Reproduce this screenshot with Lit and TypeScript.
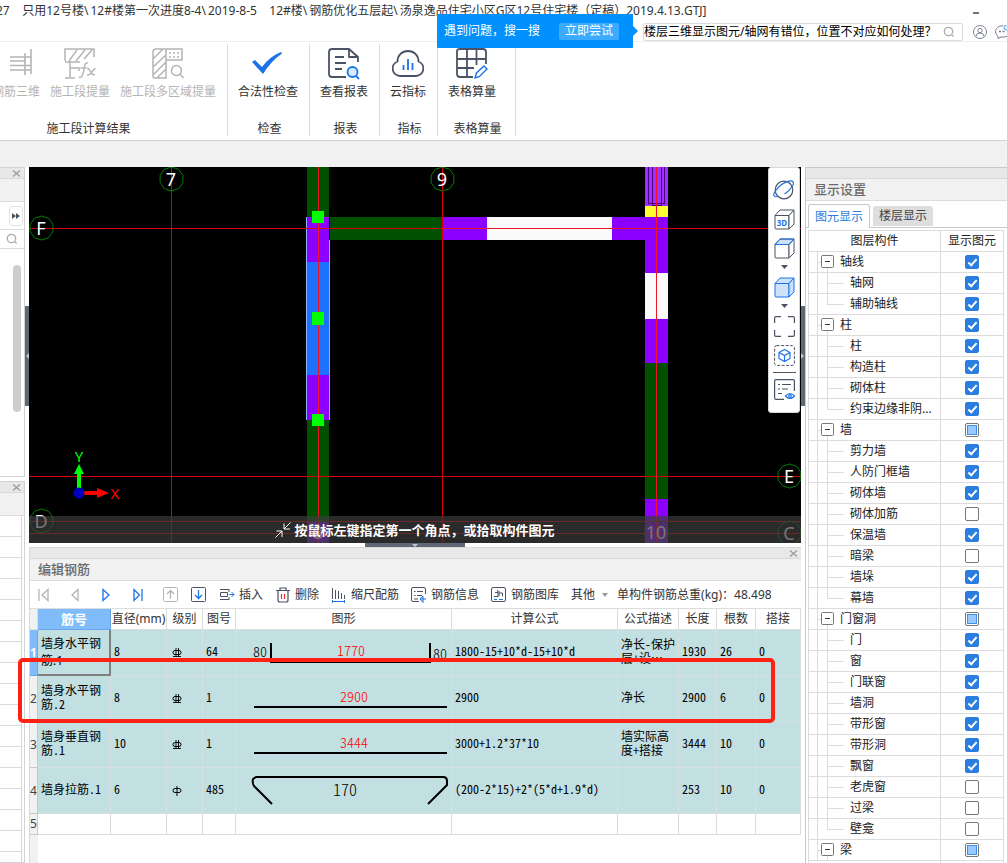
import { LitElement, html, svg, css } from "lit";
import { customElement } from "lit/decorators.js";

const dark = "#4a5365";
const blue = "#1a73e8";
const gray = "#b4b4b4";

const controls = css`
  *,
  *::before,
  *::after {
    box-sizing: border-box;
  }
  button {
    font: inherit;
    color: inherit;
    background: none;
    border: 0;
    padding: 0;
    margin: 0;
    display: inline-flex;
    align-items: center;
    justify-content: center;
    white-space: nowrap;
  }
  svg {
    display: block;
    flex: none;
  }
  table {
    border-collapse: separate;
    border-spacing: 0;
    table-layout: fixed;
    width: 100%;
  }
  th {
    font-weight: normal;
  }
`;

const panelHead = css`
  .grip {
    height: 11px;
    background: #e8e8e8;
    border-bottom: 1px solid #d9d9d9;
    display: flex;
    align-items: center;
    justify-content: flex-end;
    padding-right: 3px;
  }
  .caption {
    height: 22px;
    background: #f1f1f1;
    border-bottom: 1px solid #dcdcdc;
    margin: 0;
    padding: 0 8px;
    font-size: 13px;
    line-height: 21px;
    font-weight: 500;
    color: #6a6a6a;
  }
`;

const closeIcon = html`<svg width="9" height="9" viewBox="0 0 9 9">
  <path d="M1 1.5l7 6M8 1.5l-7 6" stroke="#999" fill="none" stroke-width="1.2" />
</svg>`;

const searchIcon = html`<svg width="12" height="12" viewBox="0 0 12 12" fill="none" stroke="#adadad" stroke-width="1.3">
  <circle cx="5.5" cy="5.5" r="4.2" /><path d="M8.6 8.6l2 2" />
</svg>`;

const ribbonIcons: Record<string, unknown> = {
  steel: html`<svg width="32" height="32" viewBox="0 0 32 32" fill="none" stroke=${gray} stroke-width="1.6">
    <path d="M31 1v25M25 5v22M10 9h21M10 13h15M10 22h21M10 17.5h21" />
  </svg>`,
  fx: html`<svg width="32" height="32" viewBox="0 0 32 32" fill="none" stroke=${gray} stroke-width="1.5">
    <path d="M1 13V1h29v8M1 14h15M5 13L13 2M12 13L21 2M20 11l8-9M6 14v15M1 30h10M6 20h9v3" />
    <path d="M24 15c-4-1-3 4-4.500 9s-2 6-4.500 5M16.500 20h6M23 20.500c4-1 3 8 8 6M31.500 20.500c-3 0-4 7-8.500 6.500" stroke-width="1.4" />
  </svg>`,
  area: html`<svg width="32" height="32" viewBox="0 0 32 32" fill="none" stroke=${gray} stroke-width="1.5">
    <path d="M14 12V30H3q-2 0-2-2V4q0-3 3-3H30v11H14V1M1 11L11 1M1 19L14 7M1 27L14 14M5 30l9-9" />
    <path d="M17 5h10M17 9h10" stroke-dasharray="2 2" />
    <circle cx="24.5" cy="22.500" r="5" /><path d="M28 26l3.500 4" />
  </svg>`,
  check: html`<svg width="32" height="32" viewBox="0 0 32 32">
    <path d="M0 14l3-2 7 7Q17 9 29 4l1 1.500Q19 13 11 26z" fill=${blue} />
  </svg>`,
  report: html`<svg width="32" height="32" viewBox="0 0 32 32" fill="none" stroke=${dark} stroke-width="1.8">
    <path d="M18 29H4q-3 0-3-3V4q0-3 3-3H21l9 8v5M21 1.500V9h9" stroke-linejoin="round" />
    <path d="M7 9h9M7 15h11M7 21h7" />
    <circle cx="24.500" cy="24" r="5" stroke=${blue} fill="#d9e9ff" /><path d="M28 28l3 3" stroke=${blue} />
  </svg>`,
  cloud: html`<svg width="32" height="32" viewBox="0 0 32 32" fill="none" stroke=${dark} stroke-width="1.800">
    <path d="M8 28a7.500 7.500 0 0 1-2.500-14.500C5.500 7 10 3 16 3S26.500 7 26.500 13.500A7.500 7.500 0 0 1 24 28z" />
    <path d="M11.500 17v5M16 11v11M20.500 15v7" stroke=${blue} />
  </svg>`,
  sheet: html`<svg width="32" height="32" viewBox="0 0 32 32" fill="none" stroke=${dark} stroke-width="1.8">
    <path d="M17 29H4q-3 0-3-3V3q0-2 3-2H27q3 0 3 3V16M1 11h29M1 20h17M11 1v28M20.500 1v16" />
    <path d="M19 30l1.500-5L28 18l3 3-7.500 7.500z" stroke=${blue} stroke-width="1.4" />
  </svg>`,
};

interface RibbonItem {
  icon: string;
  text: string;
  disabled?: boolean;
}

const ribbon: { name: string; cls?: string; items: RibbonItem[] }[] = [
  {
    name: "施工段计算结果",
    cls: "first",
    items: [
      { icon: "steel", text: "钢筋三维", disabled: true },
      { icon: "fx", text: "施工段提量", disabled: true },
      { icon: "area", text: "施工段多区域提量", disabled: true },
    ],
  },
  { name: "检查", items: [{ icon: "check", text: "合法性检查" }] },
  { name: "报表", items: [{ icon: "report", text: "查看报表" }] },
  { name: "指标", items: [{ icon: "cloud", text: "云指标" }] },
  { name: "表格算量", cls: "last", items: [{ icon: "sheet", text: "表格算量" }] },
];

const path = [
  "27    只用12号楼\\",
  "12#楼第一次进度8-4\\",
  "2019-8-5    12#楼\\",
  "钢筋优化五层起\\",
  "汤泉逸品住宅小区G区12号住宅楼（定稿）2019.4.13.GTJ]",
];

@customElement("app-header")
class AppHeader extends LitElement {
  static styles = [
    controls,
    css`
      :host {
        display: block;
        position: relative;
        background: #fff;
      }
      .title {
        height: 22px;
        display: flex;
        justify-content: space-between;
        overflow: hidden;
        line-height: 21px;
        color: #333;
      }
      .title h1 {
        margin: 0 0 0 -4px;
        font: inherit;
        white-space: pre;
        display: flex;
        gap: 2px;
      }
      .minimize {
        width: 6px;
        height: 2px;
        margin: 12px 28px 0 0;
        background: #777;
      }
      .tools {
        height: 20px;
        border-bottom: 1px solid #efefef;
        display: flex;
        align-items: center;
        justify-content: flex-end;
        overflow: hidden;
      }
      .search {
        width: 320px;
        height: 18px;
        border: 1px solid #dcdcdc;
        border-radius: 2px;
        display: flex;
        align-items: center;
        padding-right: 7px;
        margin-right: 10px;
      }
      .search input {
        flex: 1;
        min-width: 0;
        height: 16px;
        border: 0;
        outline: 0;
        padding: 0;
        background: none;
        font: inherit;
        color: #000;
      }
      .user {
        margin-right: 8px;
      }
      .chat {
        width: 12px;
        overflow: hidden;
        justify-content: flex-start;
      }
      .tip {
        position: absolute;
        left: 437px;
        top: 14px;
        width: 196px;
        height: 34px;
        background: #0091ff;
        color: #fff;
        border-radius: 1px;
        display: flex;
        align-items: center;
        justify-content: space-between;
        padding: 0 14px 0 7px;
      }
      .tip::after {
        content: "";
        position: absolute;
        right: -5px;
        top: 12px;
        border: 5px solid transparent;
        border-right: 0;
        border-left-color: #0091ff;
      }
      .tip button {
        width: 60px;
        height: 17px;
        background: #3aabff;
        border-radius: 2px;
      }
      .ribbon {
        height: 99px;
        padding: 2px 0 4px;
        border-bottom: 1px solid #d2d2d2;
        display: flex;
        overflow: hidden;
      }
      .group {
        border-right: 1px solid #dcdcdc;
        padding: 4px 11px 0 10px;
        display: flex;
        flex-direction: column;
        justify-content: space-between;
        color: #333;
      }
      .first {
        width: 280px;
        margin-left: -52px;
      }
      .last {
        width: 78px;
      }
      .items {
        display: flex;
        gap: 10px;
      }
      .first .items {
        justify-content: flex-end;
      }
      .items button {
        flex-direction: column;
        gap: 4px;
        line-height: 16px;
      }
      .items button:disabled {
        color: #b4b4b4;
      }
      .name {
        text-align: center;
        line-height: 14px;
        margin-left: 3px;
      }
      .band {
        height: 26px;
        background: #f1f1f1;
      }
    `,
  ];

  render() {
    return html`
      <div class="title">
        <h1>${path.map((p) => html`<span>${p}</span>`)}</h1>
        <button class="minimize" aria-label="最小化"></button>
      </div>
      <div class="tools">
        <div class="search">
          <input aria-label="搜索" .value=${"楼层三维显示图元/轴网有错位，位置不对应如何处理？"} />
          ${searchIcon}
        </div>
        <button class="user" aria-label="用户">
          <svg width="14" height="14" viewBox="0 0 14 14" fill="none" stroke="#7d8491">
            <circle cx="7" cy="7" r="6.500" /><circle cx="7" cy="5.500" r="2.200" />
            <path d="M3 11.500q0-3.500 4-3.500t4 3.500" />
          </svg>
        </button>
        <button class="chat" aria-label="消息">
          <svg width="16" height="14" viewBox="0 0 16 14" fill="none" stroke="#6e7686">
            <path d="M8 .8C3 .8.600 3.500.600 6.500c0 2.500 1.400 4 2.400 4.800V13.500l3-1.500q8 .8 9-5" />
            <path d="M4 6.500h2M7.500 6.500h2" stroke-width="1.500" />
            <circle cx="11.500" cy="2.500" r="2.500" stroke="#3b93f5" />
          </svg>
        </button>
      </div>
      <nav class="ribbon">
        ${ribbon.map(
          (g) => html`<div class="group ${g.cls ?? ""}">
            <div class="items">
              ${g.items.map(
                (i) => html`<button ?disabled=${i.disabled}>${ribbonIcons[i.icon]}<span>${i.text}</span></button>`
              )}
            </div>
            <div class="name">${g.name}</div>
          </div>`
        )}
      </nav>
      <div class="band"></div>
      <div class="tip"><span>遇到问题，搜一搜</span><button>立即尝试</button></div>
    `;
  }
}

@customElement("side-dock")
class SideDock extends LitElement {
  static styles = [
    controls,
    panelHead,
    css`
      :host {
        display: flex;
        flex-direction: column;
        gap: 4px;
        background: #fff;
        overflow: hidden;
      }
      .panel {
        border: 1px solid #d2d2d2;
        border-left: 0;
      }
      .upper {
        flex: none;
        height: 310px;
      }
      .lower {
        flex: 1;
        min-height: 0;
        overflow: hidden;
      }
      .bar {
        height: 23px;
        background: #f1f1f1;
        border-bottom: 1px solid #dcdcdc;
      }
      .more {
        height: 28px;
        border-bottom: 1px solid #dcdcdc;
        display: flex;
        align-items: center;
        justify-content: flex-end;
        padding-right: 1px;
      }
      .more button {
        width: 14px;
        height: 20px;
        border: 1px solid #e3e3e3;
        border-radius: 3px;
      }
      .find {
        height: 19px;
        width: 100%;
        border-bottom: 1px solid #dcdcdc;
      }
      .thumb {
        width: 8px;
        height: 147px;
        margin: 16px 3px 0 auto;
        border-radius: 4px;
        background: #cdcdcd;
      }
      .line {
        height: 21px;
        margin-right: 2px;
        border-right: 1px solid #d6d6d6;
        border-bottom: 1px solid #dcdcdc;
      }
    `,
  ];

  render() {
    return html`
      <section class="panel upper">
        <div class="grip"><button aria-label="关闭">${closeIcon}</button></div>
        <div class="bar"></div>
        <div class="more">
          <button aria-label="更多">
            <svg width="8" height="6" viewBox="0 0 8 6" fill=${dark}><path d="M0 0l4 3-4 3zM4 0l4 3-4 3z" /></svg>
          </button>
        </div>
        <button class="find" aria-label="查找">${searchIcon}</button>
        <div class="thumb"></div>
      </section>
      <section class="panel lower">
        <div class="grip"><button aria-label="关闭">${closeIcon}</button></div>
        <div class="bar"></div>
        ${Array.from({ length: 20 }, () => html`<div class="line"></div>`)}
      </section>
    `;
  }
}

const cube = (stroke: string, face: string, top: string) => svg`
  <path d="M1 6.500h14v13.500H2q-1 0-1-1z" fill=${face} stroke=${stroke} />
  <path d="M1 6.500L6 1h14l-5 5.500z" fill=${top} stroke=${stroke} />
  <path d="M20 1v14l-5 5V6.500z" fill=${face} stroke=${stroke} />`;

const caret = html`<svg width="7" height="4" viewBox="0 0 7 4"><path d="M0 0h7L3.500 4z" fill=${dark} /></svg>`;

const ring = (x: number, y: number) =>
  Array.from({ length: 10 }, (_, i) => {
    const a = ((i * 36 - 90) * Math.PI) / 180;
    return `${(x + 12 * Math.cos(a)).toFixed(1)},${(y + 12 * Math.sin(a)).toFixed(1)}`;
  }).join(" ");

const axisMarks: [string, number, number][] = [
  ["7", 171, 179],
  ["9", 442, 179],
  ["F", 41, 228],
  ["E", 789, 476],
  ["D", 41, 521],
  ["C", 789, 533],
  ["8", 318, 532],
  ["10", 656, 532],
];

const walls: [number, number, number, number, string][] = [
  [307, 167, 22, 376, "#005000"],
  [307, 217, 22, 45, "#8b00ff"],
  [307, 262, 22, 113, "#1e70ff"],
  [307, 375, 22, 45, "#8b00ff"],
  [307, 521, 22, 22, "#8b00ff"],
  [330, 217, 112, 23, "#005000"],
  [442, 217, 45, 23, "#8b00ff"],
  [487, 217, 125, 23, "#fafafa"],
  [612, 217, 56, 23, "#8b00ff"],
  [645, 167, 23, 39, "#a030ff"],
  [645, 206, 23, 11, "#ffff30"],
  [645, 240, 23, 33, "#8b00ff"],
  [645, 273, 23, 46, "#fafafa"],
  [645, 319, 23, 44, "#8b00ff"],
  [645, 363, 23, 136, "#005000"],
  [645, 499, 23, 44, "#8b00ff"],
];

@customElement("model-view")
class ModelView extends LitElement {
  static styles = [
    controls,
    css`
      :host {
        display: block;
        position: relative;
        background: #000;
        overflow: hidden;
      }
      .mark {
        font-size: 18px;
        fill: #fff;
        text-anchor: middle;
      }
      .axis {
        font-size: 15px;
        text-anchor: middle;
      }
      .status {
        position: absolute;
        left: 0;
        right: 0;
        bottom: 0;
        height: 27px;
        background: rgba(60, 60, 60, 0.7);
        color: #fff;
        font-size: 13px;
        font-weight: bold;
        display: flex;
        align-items: center;
        justify-content: center;
        gap: 3px;
      }
      .palette {
        position: absolute;
        right: 1px;
        top: 0;
        width: 32px;
        height: 246px;
        background: #fff;
        border: 1px solid #d8d8d8;
        border-radius: 3px;
        padding-top: 12px;
        display: flex;
        flex-direction: column;
        align-items: center;
      }
      .palette button {
        height: 20px;
        margin-bottom: 9px;
      }
      .palette .drop {
        height: 10px;
        margin: -5px 0 5px;
      }
      .palette hr {
        width: 23px;
        height: 1px;
        border: 0;
        margin: -2px 0 6px;
        background: #555;
        flex: none;
      }
    `,
  ];

  render() {
    return html`
      <svg width="772" height="376" viewBox="29 167 772 376" role="img" aria-label="模型平面">
        <g shape-rendering="crispEdges">
          ${walls.map(([x, y, w, h, c]) => svg`<rect x=${x} y=${y} width=${w} height=${h} fill=${c} />`)}
          <path d="M306.500 217V420M329.500 240V420" stroke="#8ab4f8" fill="none" />
          <path d="M648.500 167V203H664.500V167M652.500 167V205H661.500V167M656.500 167v39" stroke="#4b0082" fill="none" />
          <path d="M29 228.500H801M29 476.500H801M29 521.500H801M29 533.500H801M171.500 167V543M442.500 167V543" stroke="#d80008" fill="none" />
          <path d="M318.500 167V543M656.500 167V543M442 228.500h226" stroke="#f01428" fill="none" />
          <path d="M312 211h12v12h-12zM312 312h12v13h-12zM312 414h12v12h-12z" fill="#0f0" />
        </g>
        ${axisMarks.map(
          ([t, x, y]) => svg`<polygon points=${ring(x + 0.5, y)} fill="none" stroke="#008000" />
            <text class="mark" x=${x} y=${y + 7}>${t}</text>`
        )}
        <path d="M77 489V474h-3l5-10 5 10h-3v15z" fill="#0f0" />
        <path d="M83 491H97v-3l12 5-12 5v-3H83z" fill="#f00" />
        <circle cx="79" cy="493" r="5.500" fill="#0000c0" />
        <text class="axis" x="79" y="462" fill="#0f0">Y</text>
        <text class="axis" x="115" y="499" fill="#f00">X</text>
      </svg>
      <div class="status">
        <svg width="16" height="16" viewBox="0 0 16 16" fill="none" stroke="#fff">
          <path d="M15.500.500L9 7M9 1.500V7h6M.500 15.500L7 9M1.500 9H7v6" />
        </svg>
        <span>按鼠标左键指定第一个角点，或拾取构件图元</span>
      </div>
      <div class="palette">
        <button aria-label="动态观察">
          <svg width="22" height="20" viewBox="0 0 22 20" fill="none" stroke=${dark} stroke-width="1.200">
            <circle cx="11" cy="10" r="8.800" />
            <path d="M5 16.500C1 17.500-.500 15 2 11.500 5 7 11 2.500 16 1.200c4-1 5.500 1 3.500 4.800-2 3.500-5 6-8 8" stroke=${blue} />
          </svg>
        </button>
        <button aria-label="三维">
          <svg width="21" height="21" viewBox="0 0 21 21" fill="none">
            ${cube(dark, "#fff", "#fff")}
            <text x="8" y="17" font-size="8" font-weight="bold" text-anchor="middle" fill=${blue}>3D</text>
          </svg>
        </button>
        <button aria-label="俯视">
          <svg width="21" height="21" viewBox="0 0 21 21">
            ${cube(dark, "#fff", "#cfe2fb")}<path d="M1 6.500L6 1h14l-5 5.500z" fill="none" stroke=${blue} />
          </svg>
        </button>
        <button class="drop" aria-label="视图选项">${caret}</button>
        <button aria-label="实体">
          <svg width="21" height="21" viewBox="0 0 21 21">${cube(blue, "#cfe2fb", "#cfe2fb")}</svg>
        </button>
        <button class="drop" aria-label="显示选项">${caret}</button>
        <button aria-label="全屏">
          <svg width="21" height="21" viewBox="0 0 21 21" fill="none" stroke=${dark} stroke-width="1.200">
            <path d="M.600 7V2q0-1.400 1.400-1.400H7M14 .600h5q1.400 0 1.400 1.400V7M20.400 14v5q0 1.400-1.400 1.400H14M7 20.400H2q-1.400 0-1.400-1.400V14" />
          </svg>
        </button>
        <button aria-label="选择实体">
          <svg width="21" height="21" viewBox="0 0 21 21" fill="none">
            <rect x=".600" y=".600" width="19.800" height="19.800" rx="2" stroke=${dark} stroke-dasharray="3 1.500" />
            <path d="M10.500 4.500l5.500 3v6l-5.500 3-5.500-3v-6zM5 7.500l5.500 3 5.500-3M10.500 10.500v6" stroke=${blue} stroke-width="1.200" />
          </svg>
        </button>
        <hr />
        <button aria-label="显示设置">
          <svg width="21" height="21" viewBox="0 0 21 21" fill="none" stroke=${dark} stroke-width="1.200">
            <path d="M10 20.400H2q-1.400 0-1.400-1.400V2q0-1.400 1.400-1.400H19q1.400 0 1.400 1.400V12" />
            <path d="M4 5.500h2M8 5.500h9M4 10h2M8 10h6M4 14.500h4" />
            <path d="M11.500 17q4.500-5 9 0-4.500 5-9 0z" stroke=${blue} /><circle cx="16" cy="17" r="1.300" stroke=${blue} />
          </svg>
        </button>
      </div>
    `;
  }
}

const grade = (three: boolean) => html`<svg width="10" height="10" viewBox="0 0 10 10" fill="none" stroke="#000">
  <rect x="1" y="2.500" width="8" height="4" rx="2" />
  ${three ? svg`<path d="M4 0v9M6.500 0v9M1 8.500h8" stroke-width=".900" />` : svg`<path d="M5 0v10" />`}
</svg>`;

const shapes = [
  svg`<path d="M35 13V32H194V13" /><text x="17" y="27">80</text><text class="red" x="101" y="26">1770</text><text x="197" y="29">80</text>`,
  svg`<path d="M18 31H211" /><text class="red" x="104" y="26">2900</text>`,
  svg`<path d="M18 31H211" /><text class="red" x="104" y="26">3444</text>`,
  svg`<path d="M36 36L18 18Q16 15 17 11L20 9H207Q211 9 211 13V17L192 36" /><text class="big" x="97" y="28">170</text>`,
];

const bars = [
  ["墙身水平钢\n筋.1", "8", "64", "1800-15+10*d-15+10*d", "净长-保护\n层+设…", "1930", "26", "0"],
  ["墙身水平钢\n筋.2", "8", "1", "2900", "净长", "2900", "6", "0"],
  ["墙身垂直钢\n筋.1", "10", "1", "3000+1.2*37*10", "墙实际高\n度+搭接", "3444", "10", "0"],
  ["墙身拉筋.1", "6", "485", "(200-2*15)+2*(5*d+1.9*d)", "", "253", "10", "0"],
];

@customElement("rebar-editor")
class RebarEditor extends LitElement {
  static styles = [
    controls,
    panelHead,
    css`
      :host {
        display: flex;
        flex-direction: column;
        position: relative;
        background: #fff;
        border: 1px solid #d9d9d9;
        border-width: 1px 0 0 1px;
      }
      .toolbar {
        height: 28px;
        border-bottom: 1px solid #dcdcdc;
        display: flex;
        align-items: center;
        padding-left: 8px;
        color: #333;
        white-space: nowrap;
      }
      .nav {
        display: flex;
        gap: 13px;
        margin-right: 14px;
      }
      .nav button {
        width: 18px;
        justify-content: flex-start;
      }
      .shift {
        gap: 10px;
        margin-right: 10px;
      }
      .actions {
        display: flex;
        gap: 12px;
        margin-right: 6px;
      }
      .actions button {
        gap: 4px;
      }
      .body {
        flex: 1;
        background: linear-gradient(to right, #f1f1f1 8px, #fff 8px);
      }
      th,
      td {
        border-right: 1px solid #dcdcdc;
        border-bottom: 1px solid #dcdcdc;
        padding: 0;
        overflow: hidden;
        white-space: nowrap;
      }
      thead th {
        height: 21px;
        color: #333;
      }
      thead .current {
        background: #80bbfa;
        color: #fff;
        font-weight: bold;
        font-size: 13px;
        border-color: #68a6ec;
      }
      .bar td {
        height: 46px;
        background: #c2dfe1;
        border-color: #d6e0e1;
        padding: 0 0 4px 3px;
        color: #000;
        line-height: 14px;
        font-family: "Noto Sans CJK SC", sans-serif;
        font-feature-settings: "hwid";
        white-space: pre;
      }
      .bar .selected {
        border-right: 2px solid #808080;
        border-bottom: 2px solid #808080;
        font-family: "Noto Sans", "Noto Sans CJK SC", sans-serif;
        font-feature-settings: normal;
        line-height: 17px;
        padding-bottom: 0;
      }
      .bar .grade {
        padding: 0 0 0 5px;
      }
      .bar .shape {
        padding: 0;
      }
      .shape svg {
        stroke: #000;
        stroke-width: 2;
        fill: none;
      }
      .shape text {
        font-size: 14px;
        font-weight: 300;
        stroke: none;
        fill: #000;
      }
      .shape .red {
        fill: #f00;
      }
      .shape .big {
        font-size: 16px;
      }
      .index {
        background: #f1f1f1;
        color: #444;
        border-color: #c8c8c8;
      }
      .index.current {
        background: #80bbfa;
        color: #fff;
        font-weight: bold;
        border-color: #68a6ec;
      }
      .blank td {
        height: 21px;
      }
      .callout {
        position: absolute;
        left: -12px;
        top: 110px;
        width: 757px;
        height: 65px;
        border: 4px solid #ff2214;
        border-radius: 5px;
        pointer-events: none;
      }
    `,
  ];

  render() {
    const nav = (label: string, d: string, c: string) => html`<button aria-label=${label}>
      <svg width="12" height="14" viewBox="0 0 12 14" fill="none" stroke=${c} stroke-width="1.300"><path d=${d} /></svg>
    </button>`;
    const box = (label: string, d: string, c: string, b: string) => html`<button aria-label=${label}>
      <svg width="15" height="15" viewBox="0 0 15 15" fill="none" stroke=${b}>
        <rect x=".500" y=".500" width="14" height="14" rx="1" /><path d=${d} stroke=${c} stroke-width="1.300" />
      </svg>
    </button>`;
    return html`
      <div class="grip"><button aria-label="关闭">${closeIcon}</button></div>
      <h2 class="caption">编辑钢筋</h2>
      <div class="toolbar">
        <div class="nav">
          ${nav("首条", "M1 1v12M10 1.500v11L4 7z", gray)} ${nav("上一条", "M9 1.500v11L3 7z", gray)}
          ${nav("下一条", "M3 1.500v11L9 7z", blue)} ${nav("末条", "M3 1.500v11L8.500 7zM11 1v12", blue)}
        </div>
        <div class="nav shift">
          ${box("上移", "M7.500 12V4M4 7l3.500-3.500L11 7", gray, gray)} ${box("下移", "M7.500 3v8M4 8l3.500 3.500L11 8", blue, dark)}
        </div>
        <div class="actions">
          <button>
            <svg width="16" height="14" viewBox="0 0 16 14" fill="none" stroke=${dark}>
              <path d="M1 1.500h9M1 11.500h9M1.500 4.500h7v4h-7zM10 1v3M10 9v3" />
              <path d="M10 6.500h5M12.500 4l2.500 2.500L12.500 9" stroke=${blue} />
            </svg>插入
          </button>
          <button>
            <svg width="16" height="16" viewBox="0 0 16 16" fill="none" stroke=${dark} stroke-width="1.200">
              <path d="M1 3.500h14M5 3V1h6v2M3 4v9q0 2 2 2h6q2 0 2-2V4" /><path d="M6.500 7v5M9.500 7v5" stroke="#e03030" />
            </svg>删除
          </button>
          <button>
            <svg width="16" height="16" viewBox="0 0 16 16" fill="none" stroke=${dark}>
              <path d="M1.500 1v11M4.500 3v9M7.500 4v8M10.500 6v6M13.500 8v4" /><path d="M1 14.500h13M1.500 13v3M13.500 13v3" stroke=${blue} />
            </svg>缩尺配筋
          </button>
          <button>
            <svg width="16" height="16" viewBox="0 0 16 16" fill="none" stroke=${dark}>
              <path d="M8 14.500H2q-1.500 0-1.500-1.500V2Q.500.500 2 .500H13q1.500 0 1.500 1.500V7M3 4.500h1.500M6 4.500h6M3 8.500h1.500M6 8.500h5M3 12h4" />
              <path d="M9 12h6M12 9l-3 3 3 3.500M12 9v6.500" stroke=${blue} />
            </svg>钢筋信息
          </button>
          <button>
            <svg width="16" height="16" viewBox="0 0 16 16" fill="none" stroke=${dark}>
              <rect x=".500" y=".500" width="14" height="14" rx="1.500" /><path d="M3 9.500h4v-4H4M6 3.500q1-1 1 2M8 9.500V4M8 6h3.500v3.500" />
              <path d="M3 12.500h3M8 12.500h4" stroke=${blue} />
            </svg>钢筋图库
          </button>
          <button>
            其他
            <svg width="12" height="4" viewBox="0 0 12 4"><path d="M3 0h6L6 4z" fill="#999" /></svg>
          </button>
        </div>
        <span>单构件钢筋总重(kg)：48.498</span>
      </div>
      <div class="body">
        <table>
          <colgroup>
            ${[8, 73, 56, 36, 33, 216, 0, 61, 38, 39, 45].map((w) => html`<col style=${w ? `width:${w}px` : ""} />`)}
          </colgroup>
          <thead>
            <tr>
              <th></th>
              <th class="current">筋号</th>
              ${["直径(mm)", "级别", "图号", "图形", "计算公式", "公式描述", "长度", "根数", "搭接"].map(
                (t) => html`<th>${t}</th>`
              )}
            </tr>
          </thead>
          <tbody>
            ${bars.map(
              (r, i) => html`<tr class="bar">
                <th class="index ${i === 0 ? "current" : ""}">${i + 1}</th>
                <td class=${i === 0 ? "selected" : ""}>${r[0]}</td>
                <td>${r[1]}</td>
                <td class="grade">${grade(i < 3)}</td>
                <td>${r[2]}</td>
                <td class="shape"><svg width="215" height="45" viewBox="0 0 215 45">${shapes[i]}</svg></td>
                ${r.slice(3).map((t) => html`<td>${t}</td>`)}
              </tr>`
            )}
            <tr class="blank">
              <th class="index">5</th>
              ${Array.from({ length: 10 }, () => html`<td></td>`)}
            </tr>
          </tbody>
        </table>
      </div>
      <div class="callout"></div>
    `;
  }
}

type State = "on" | "off" | "mixed";
const tree: [string, State, [string, State][]][] = [
  ["轴线", "on", [["轴网", "on"], ["辅助轴线", "on"]]],
  ["柱", "on", [["柱", "on"], ["构造柱", "on"], ["砌体柱", "on"], ["约束边缘非阴...", "on"]]],
  [
    "墙",
    "mixed",
    [["剪力墙", "on"], ["人防门框墙", "on"], ["砌体墙", "on"], ["砌体加筋", "off"], ["保温墙", "on"], ["暗梁", "off"], ["墙垛", "on"], ["幕墙", "on"]],
  ],
  [
    "门窗洞",
    "mixed",
    [["门", "on"], ["窗", "on"], ["门联窗", "on"], ["墙洞", "on"], ["带形窗", "on"], ["带形洞", "on"], ["飘窗", "on"], ["老虎窗", "off"], ["过梁", "off"], ["壁龛", "off"]],
  ],
  ["梁", "mixed", []],
];

@customElement("display-settings")
class DisplaySettings extends LitElement {
  static styles = [
    controls,
    panelHead,
    css`
      :host {
        display: block;
        background: #fff;
        border: 1px solid #c8c8c8;
        border-width: 1px 0 0 1px;
        overflow: hidden;
      }
      .tabs {
        display: flex;
        align-items: flex-end;
        gap: 3px;
        height: 27px;
        padding-left: 2px;
        border-bottom: 1px solid #c8c8c8;
      }
      .tabs button {
        width: 60px;
        height: 20px;
        margin-bottom: 1px;
        border-radius: 3px 3px 0 0;
        background: #dedede;
        color: #444;
      }
      .tabs .active {
        width: 62px;
        height: 24px;
        margin-bottom: -1px;
        background: #fff;
        border: 1px solid #c8c8c8;
        border-bottom: 0;
        color: #2b7de0;
      }
      .grid {
        margin: 2px 3px 0 2px;
        border: 1px solid #dcdcdc;
        border-width: 1px 0 0 1px;
      }
      th,
      td {
        height: 21px;
        padding: 0;
        border-right: 1px solid #dcdcdc;
        border-bottom: 1px solid #dcdcdc;
        color: #222;
      }
      .mark {
        width: 63px;
        text-align: center;
      }
      .node {
        display: flex;
        align-items: center;
        height: 20px;
        white-space: nowrap;
      }
      .node svg {
        margin-bottom: -1px;
      }
      input {
        appearance: none;
        display: grid;
        place-content: center;
        width: 14px;
        height: 14px;
        margin: 0 auto;
        border: 1px solid #777;
        border-radius: 2px;
        background: #fff;
      }
      input:checked {
        background: #2b7de0;
        border-color: #2b7de0;
      }
      input:checked::before {
        content: "";
        width: 9px;
        height: 5px;
        margin-bottom: 2px;
        border: solid #fff;
        border-width: 0 0 2px 2px;
        transform: rotate(-48deg);
      }
      input:indeterminate::before {
        content: "";
        width: 10px;
        height: 10px;
        background: #99caff;
        border: 1px solid #3f90e8;
      }
    `,
  ];

  private row(id: string, text: string, state: State, root: boolean, last: boolean) {
    const lines = root
      ? svg`<path d="M8.500 0V21M8 10.500h5" stroke="#dcdcdc" /><path d="M18.500 16v5" stroke="#dcdcdc" />
          <rect x="12.500" y="3.500" width="12" height="12" rx="1" stroke="#777" /><path d="M16 9.500h5" stroke="#333" />`
      : svg`<path d=${`M8.500 0V21M18.500 0V${last ? 10 : 21}M18 10.500h17`} stroke="#dcdcdc" />`;
    return html`<tr>
      <td>
        <div class="node">
          <svg width=${root ? 31 : 41} height="21" fill="none">${lines}</svg>
          <label for=${id}>${text}</label>
        </div>
      </td>
      <td><input id=${id} type="checkbox" .checked=${state === "on"} .indeterminate=${state === "mixed"} /></td>
    </tr>`;
  }

  render() {
    return html`
      <div class="grip"></div>
      <h2 class="caption">显示设置</h2>
      <div class="tabs"><button class="active">图元显示</button><button>楼层显示</button></div>
      <div class="grid">
        <table>
          <thead>
            <tr><th>图层构件</th><th class="mark">显示图元</th></tr>
          </thead>
          <tbody>
            ${tree.map(([name, state, kids], g) => [
              this.row(`g${g}`, name, state, true, false),
              ...kids.map(([t, s], k) => this.row(`g${g}k${k}`, t, s, false, k === kids.length - 1)),
            ])}
            <tr><td></td><td></td></tr>
          </tbody>
        </table>
      </div>
    `;
  }
}

@customElement("app-root")
class AppRoot extends LitElement {
  static styles = [
    controls,
    css`
      :host {
        display: flex;
        flex-direction: column;
        height: 100vh;
        overflow: hidden;
        background: #fff;
        font-family: "Noto Sans", "Noto Sans CJK SC", sans-serif;
        font-size: 12px;
        line-height: 16px;
        color: #333;
      }
      app-header {
        flex: none;
      }
      .work {
        flex: 1;
        min-height: 0;
        display: grid;
        grid-template-columns: 25px 4px minmax(0, 1fr) 4px 202px;
      }
      .work > * {
        min-height: 0;
      }
      .split {
        padding-top: 139px;
      }
      .handle {
        background: #5f6976;
        width: 4px;
        height: 100px;
      }
      .center {
        display: flex;
        flex-direction: column;
      }
      model-view {
        flex: 1;
        min-height: 0;
      }
      .below {
        display: flex;
        justify-content: center;
      }
      .below .handle {
        width: 100px;
        height: 4px;
      }
      rebar-editor {
        height: 316px;
      }
    `,
  ];

  render() {
    const handle = (d: string) => html`<button class="handle" aria-label="折叠">
      <svg width="4" height="6" viewBox="0 0 4 6"><path d=${d} fill="#c3c8ce" /></svg>
    </button>`;
    return html`
      <app-header></app-header>
      <main class="work">
        <side-dock></side-dock>
        <div class="split">${handle("M4 0v6L1 3z")}</div>
        <div class="center">
          <model-view></model-view>
          <div class="below">
            <button class="handle" aria-label="折叠">
              <svg width="6" height="3" viewBox="0 0 6 3"><path d="M0 0h6L3 3z" fill="#c3c8ce" /></svg>
            </button>
          </div>
          <rebar-editor></rebar-editor>
        </div>
        <div class="split">${handle("M0 0v6L3 3z")}</div>
        <display-settings></display-settings>
      </main>
    `;
  }
}
